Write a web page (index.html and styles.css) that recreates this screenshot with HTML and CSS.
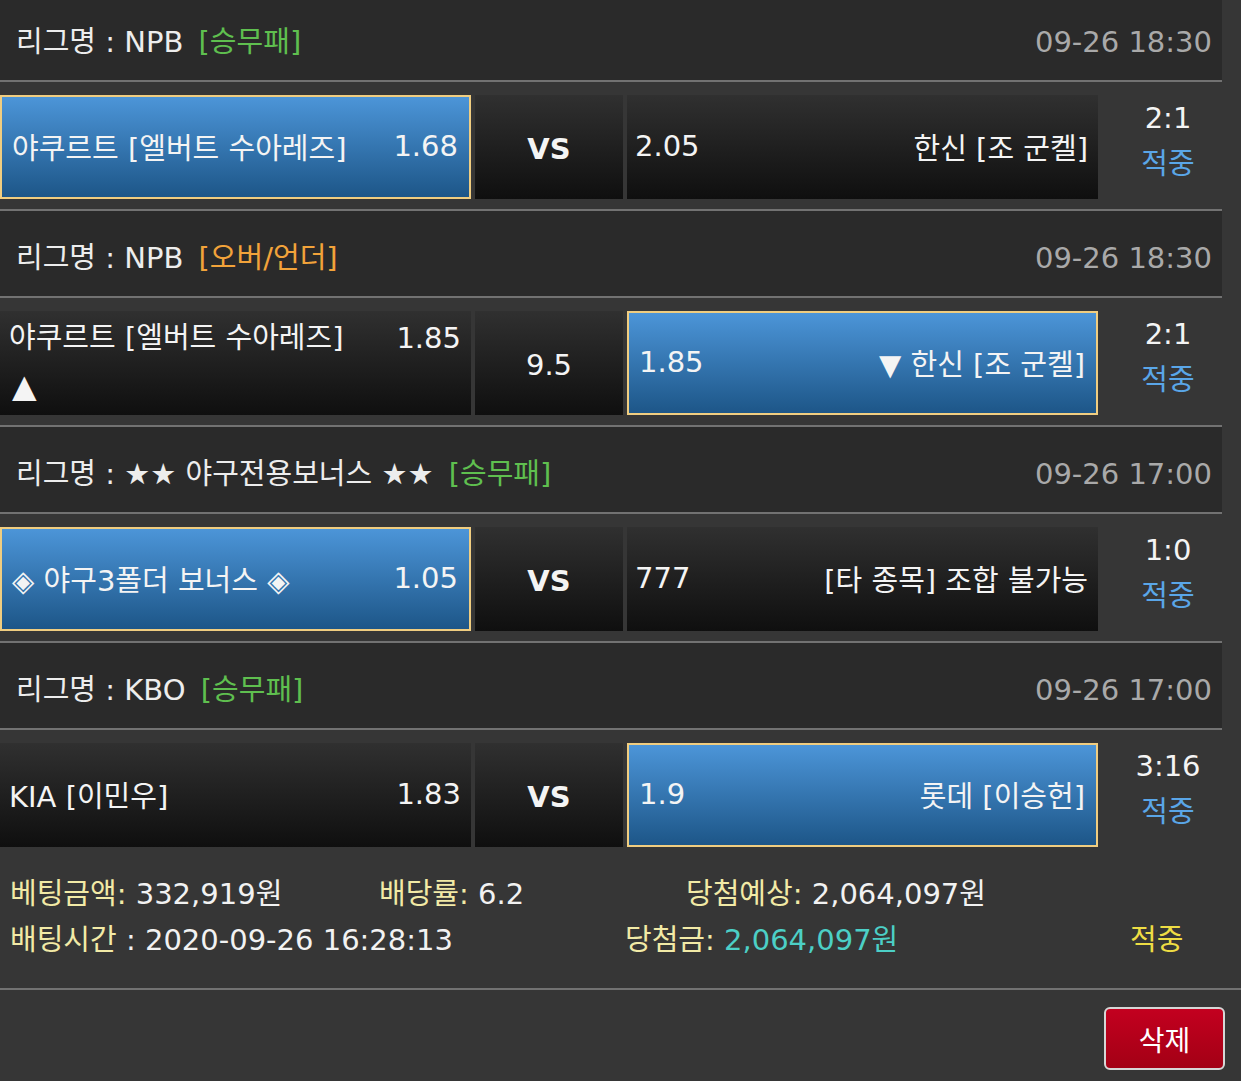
FILE: index.html
```html
<!DOCTYPE html>
<html lang="ko">
<head>
  <meta charset="UTF-8" />
  <meta name="viewport" content="width=device-width, initial-scale=1.0"/>
  <title>베팅내역</title>
  <link rel="stylesheet" href="styles.css">
</head>
<body>

  <div class="bet-list">

    <div class="league">
      <div class="league-name">리그명 : NPB <span class="type win">[승무패]</span></div>
      <div class="league-time">09-26 18:30</div>
    </div>
    <div class="match">
      <div class="cell home picked">
        <span class="team">야쿠르트 [엘버트 수아레즈]</span>
        <span class="odds">1.68</span>
      </div>
      <div class="cell mid"><b>VS</b></div>
      <div class="cell away">
        <span class="odds">2.05</span>
        <span class="team">한신 [조 군켈]</span>
      </div>
      <div class="score">
        <div>2:1</div>
        <div class="hit">적중</div>
      </div>
    </div>

    <div class="league">
      <div class="league-name">리그명 : NPB <span class="type ou">[오버/언더]</span></div>
      <div class="league-time">09-26 18:30</div>
    </div>
    <div class="match">
      <div class="cell home two-line">
        <div class="line">
          <span class="team">야쿠르트 [엘버트 수아레즈]</span>
          <span class="odds">1.85</span>
        </div>
        <div class="line arrow">▲</div>
      </div>
      <div class="cell mid">9.5</div>
      <div class="cell away picked">
        <span class="odds">1.85</span>
        <span class="team">▼ 한신 [조 군켈]</span>
      </div>
      <div class="score">
        <div>2:1</div>
        <div class="hit">적중</div>
      </div>
    </div>

    <div class="league">
      <div class="league-name">리그명 : ★★ 야구전용보너스 ★★ <span class="type win">[승무패]</span></div>
      <div class="league-time">09-26 17:00</div>
    </div>
    <div class="match">
      <div class="cell home picked">
        <span class="team">◈ 야구3폴더 보너스 ◈</span>
        <span class="odds">1.05</span>
      </div>
      <div class="cell mid"><b>VS</b></div>
      <div class="cell away">
        <span class="odds">777</span>
        <span class="team">[타 종목] 조합 불가능</span>
      </div>
      <div class="score">
        <div>1:0</div>
        <div class="hit">적중</div>
      </div>
    </div>

    <div class="league">
      <div class="league-name">리그명 : KBO <span class="type win">[승무패]</span></div>
      <div class="league-time">09-26 17:00</div>
    </div>
    <div class="match">
      <div class="cell home">
        <span class="team">KIA [이민우]</span>
        <span class="odds">1.83</span>
      </div>
      <div class="cell mid"><b>VS</b></div>
      <div class="cell away picked">
        <span class="odds">1.9</span>
        <span class="team">롯데 [이승헌]</span>
      </div>
      <div class="score">
        <div>3:16</div>
        <div class="hit">적중</div>
      </div>
    </div>

  </div>

  <div class="summary">
    <div class="summary-row">
      <div class="col-amount"><span class="label">베팅금액:</span> 332,919원</div>
      <div class="col-rate"><span class="label">배당률:</span> 6.2</div>
      <div><span class="label">당첨예상:</span> 2,064,097원</div>
    </div>
    <div class="summary-row">
      <div class="col-time"><span class="label">배팅시간</span> : 2020-09-26 16:28:13</div>
      <div class="col-win"><span class="label">당첨금:</span> <span class="prize">2,064,097원</span></div>
      <div class="result">적중</div>
    </div>
  </div>

  <div class="actions">
    <button class="delete-btn">삭제</button>
  </div>

</body>
</html>
```

FILE: styles.css
```css
* {
  box-sizing: border-box;
}

body {
  margin: 0;
  background-color: #363636;
  color: #f2f2f2;
  font-family: "DejaVu Sans", "Noto Sans CJK KR", sans-serif;
  font-size: 29px;
  overflow: hidden;
}

.bet-list {
  width: 1222px;
  margin-top: -5px;
}

.league {
  display: flex;
  justify-content: space-between;
  height: 87px;
  padding: 24px 10px 0 16px;
  line-height: 46px;
  background-color: #2a2a2a;
  border-bottom: 2px solid #727272;
}

.league-name {
  color: #ededed;
}

.type {
  margin-left: 6px;
}

.type.win { color: #5fbf4f; }
.type.ou  { color: #f2a33a; }

.league-time {
  color: #a9a9a9;
}

.match {
  display: flex;
  gap: 4px;
  padding: 13px 0 10px;
  border-bottom: 2px solid #727272;
}

.match:last-child {
  border-bottom: none;
}

.cell {
  height: 104px;
  display: flex;
  align-items: center;
  justify-content: space-between;
  padding: 0 10px 3px 9px;
  background: linear-gradient(#303030, #0f0f0f);
  color: #f4f4f4;
}

.cell.home,
.cell.away {
  width: 471px;
}

.cell.away {
  padding: 0 10px 3px 8px;
}

.cell.mid {
  width: 148px;
  justify-content: center;
  padding: 4px 0 0;
}

.cell.mid b {
  font-size: 29px;
}

.cell.picked {
  border: 2px solid #f0cd80;
  padding: 0 11px 3px 10px;
  background: linear-gradient(#4c95d8, #1d5688);
}

.cell.two-line {
  flex-direction: column;
  align-items: stretch;
  justify-content: center;
  padding-bottom: 2px;
  line-height: 48px;
}

.line {
  display: flex;
  justify-content: space-between;
}

.arrow {
  padding-left: 3px;
  font-size: 32px;
}

.score {
  flex: 1;
  padding: 0 0 0 12px;
  text-align: center;
  line-height: 46px;
  color: #f4f4f4;
}

.hit {
  color: #5aa6e8;
}

.summary {
  padding: 14px 0 25px 10px;
  line-height: 46px;
  border-bottom: 2px solid #727272;
}

.summary-row {
  display: flex;
}

.label {
  color: #f2eaa6;
}

.col-amount { width: 369px; }
.col-rate   { width: 307px; }
.col-time   { width: 615px; }
.col-win    { width: 505px; }

.prize {
  color: #4ccfc6;
}

.result {
  color: #eedd44;
}

.actions {
  display: flex;
  justify-content: flex-end;
  padding: 17px 16px 0 0;
}

.delete-btn {
  width: 121px;
  height: 63px;
  font-family: inherit;
  font-size: 28px;
  color: white;
  background: linear-gradient(#c3001f, #a30015);
  border: 2px solid #d6d6d6;
  border-radius: 6px;
  cursor: pointer;
}
```
